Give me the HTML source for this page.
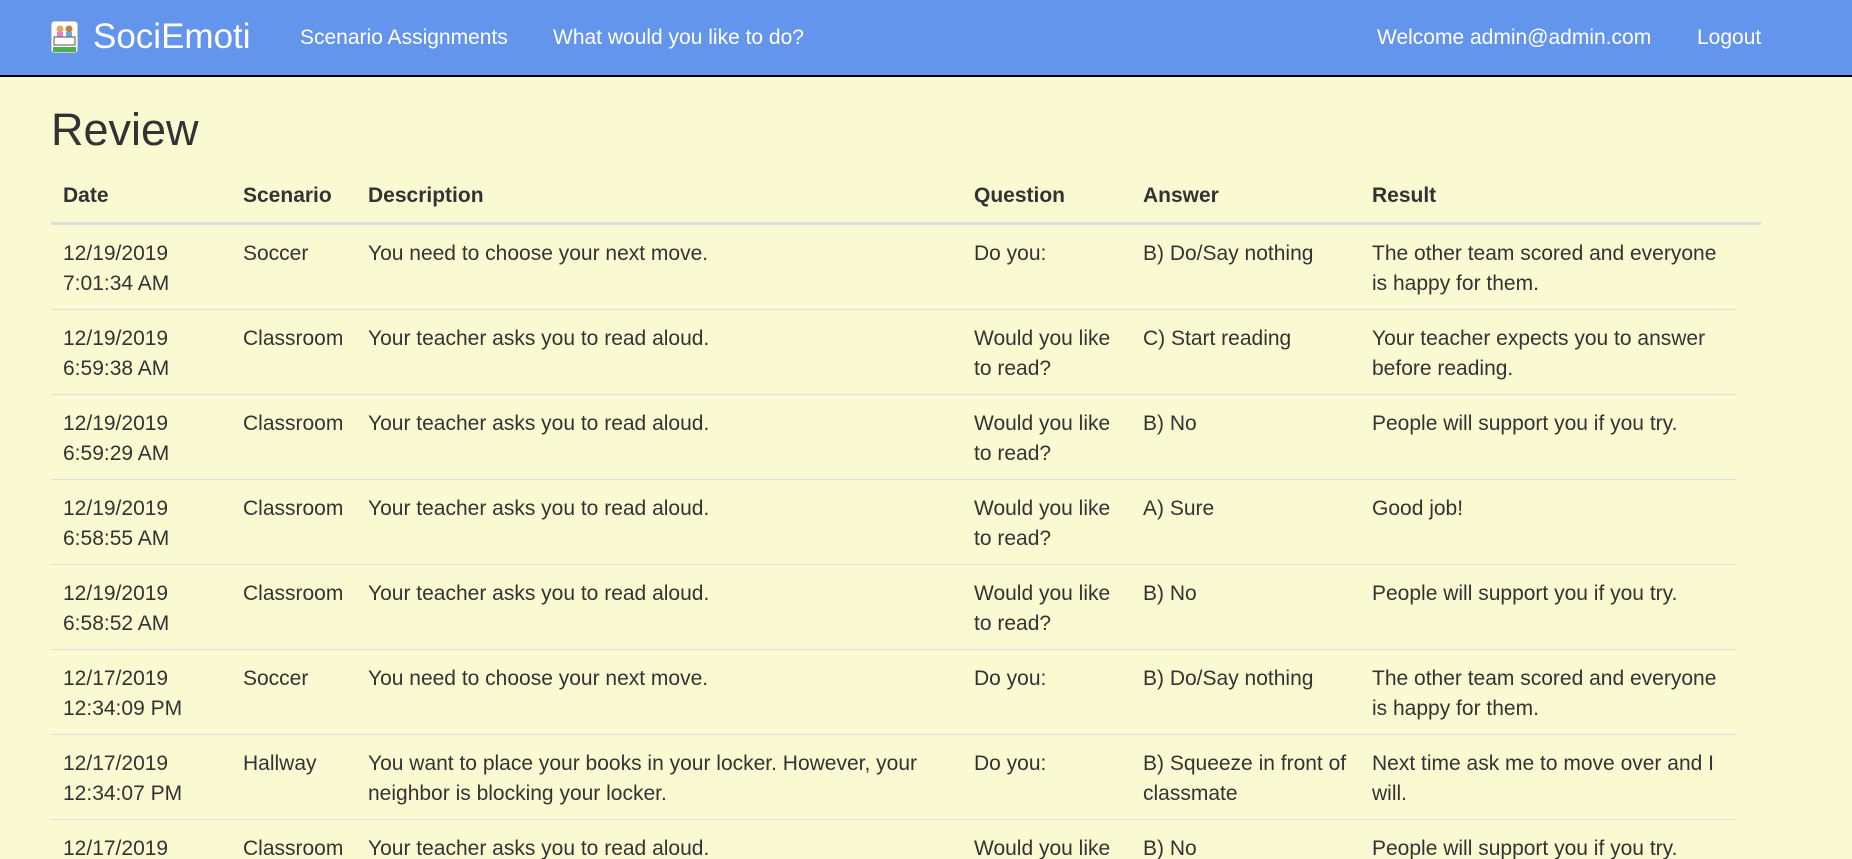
<!DOCTYPE html>
<html><head><meta charset="utf-8"><style>
*{box-sizing:border-box;margin:0;padding:0}
html,body{width:1852px;height:859px;overflow:hidden}
body{background:#FAFAD2;font-family:"Liberation Sans",Arial,sans-serif;color:#333;font-size:21px;line-height:30px;position:relative}
.nav{position:absolute;left:0;top:0;width:1852px;height:77px;background:#6495ED;border-bottom:2px solid #000}
.nav span{position:absolute;color:#fff;white-space:nowrap}
.brand{left:93px;top:17px;font-size:35px;line-height:40px}
.lnk{top:23px;font-size:21px;line-height:30px}
.logo{position:absolute;left:51px;top:21px;width:27px;height:32px}
h2{position:absolute;left:51px;top:103px;font-size:45px;font-weight:normal;line-height:54px;color:#333}
table{position:absolute;left:51px;top:169px;width:1686px;border-collapse:collapse;table-layout:fixed}
th{text-align:left;font-weight:bold;padding:12px;height:54px;vertical-align:bottom}
td{padding:14px 12px 10px;vertical-align:top;border-top:1px solid #ddd;height:85px}
tbody tr:first-child td{border-top:none;height:86px;padding-top:16px}
.hl{position:absolute;left:51px;top:222px;width:1710px;height:3px;background:#ddd}
</style></head><body>
<div class="nav">
<svg class="logo" viewBox="0 0 27 32"><rect x="0.5" y="0.5" width="26" height="31" rx="3" fill="#fff" stroke="#ccc"/><circle cx="9" cy="8" r="3.5" fill="#e8a070"/><circle cx="18" cy="8" r="3.5" fill="#c08050"/><rect x="6" y="11" width="6" height="9" fill="#f080c0"/><rect x="15" y="11" width="6" height="9" fill="#60b0e0"/><rect x="3" y="16" width="21" height="8" fill="#fff" stroke="#555" stroke-width="1"/><rect x="2" y="26" width="23" height="5" fill="#4caf50"/></svg>
<span class="brand">SociEmoti</span>
<span class="lnk" style="left:300px">Scenario Assignments</span>
<span class="lnk" style="left:553px">What would you like to do?</span>
<span class="lnk" style="left:1377px">Welcome admin@admin.com</span>
<span class="lnk" style="left:1697px">Logout</span>
</div>
<h2>Review</h2>
<div class="hl"></div>
<table>
<colgroup><col style="width:180px"><col style="width:125px"><col style="width:606px"><col style="width:169px"><col style="width:229px"><col></colgroup>
<thead><tr><th>Date</th><th>Scenario</th><th>Description</th><th>Question</th><th>Answer</th><th>Result</th></tr></thead>
<tbody>
<tr><td>12/19/2019<br>7:01:34 AM</td><td>Soccer</td><td>You need to choose your next move.</td><td>Do you:</td><td>B) Do/Say nothing</td><td>The other team scored and everyone is happy for them.</td></tr>
<tr><td>12/19/2019<br>6:59:38 AM</td><td>Classroom</td><td>Your teacher asks you to read aloud.</td><td>Would you like to read?</td><td>C) Start reading</td><td>Your teacher expects you to answer before reading.</td></tr>
<tr><td>12/19/2019<br>6:59:29 AM</td><td>Classroom</td><td>Your teacher asks you to read aloud.</td><td>Would you like to read?</td><td>B) No</td><td>People will support you if you try.</td></tr>
<tr><td>12/19/2019<br>6:58:55 AM</td><td>Classroom</td><td>Your teacher asks you to read aloud.</td><td>Would you like to read?</td><td>A) Sure</td><td>Good job!</td></tr>
<tr><td>12/19/2019<br>6:58:52 AM</td><td>Classroom</td><td>Your teacher asks you to read aloud.</td><td>Would you like to read?</td><td>B) No</td><td>People will support you if you try.</td></tr>
<tr><td>12/17/2019<br>12:34:09 PM</td><td>Soccer</td><td>You need to choose your next move.</td><td>Do you:</td><td>B) Do/Say nothing</td><td>The other team scored and everyone is happy for them.</td></tr>
<tr><td>12/17/2019<br>12:34:07 PM</td><td>Hallway</td><td>You want to place your books in your locker. However, your neighbor is blocking your locker.</td><td>Do you:</td><td>B) Squeeze in front of classmate</td><td>Next time ask me to move over and I will.</td></tr>
<tr><td>12/17/2019<br>12:33:50 PM</td><td>Classroom</td><td>Your teacher asks you to read aloud.</td><td>Would you like to read?</td><td>B) No</td><td>People will support you if you try.</td></tr>
</tbody></table>
</body></html>
